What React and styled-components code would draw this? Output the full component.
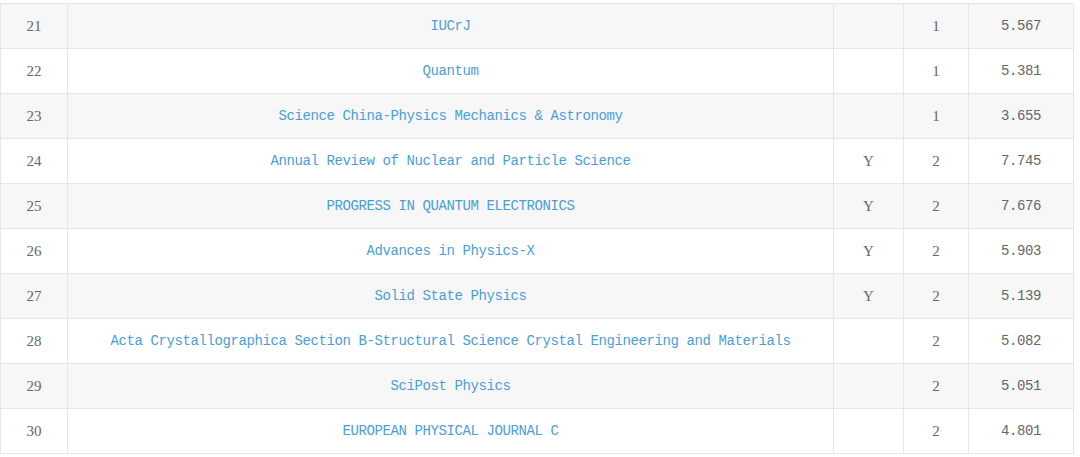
import React from 'react';
import styled, { createGlobalStyle } from 'styled-components';

const GlobalStyle = createGlobalStyle`
  body {
    margin: 0;
    background: #ffffff;
    font-family: "Liberation Mono", "DejaVu Sans Mono", monospace;
  }
`;

const Page = styled.div`
  width: 1080px;
  height: 457px;
  overflow: hidden;
  padding-top: 3px;
  box-sizing: border-box;
`;

const Table = styled.table`
  width: 1074px;
  border-collapse: collapse;
  table-layout: fixed;
`;

const Row = styled.tr`
  height: 45px;
  background: ${props => (props.$striped ? '#f7f7f7' : '#ffffff')};
`;

const Cell = styled.td`
  border: 1px solid #e6e6e6;
  padding: 0;
  text-align: center;
  vertical-align: middle;
  font-family: "Liberation Serif", "DejaVu Serif", serif;
  font-size: 15px;
  color: #666666;
  width: ${props => props.$w}px;
`;

const NameCell = styled(Cell)`
  font-family: "Liberation Mono", "DejaVu Sans Mono", monospace;
  font-size: 14px;
  letter-spacing: -0.4px;
  color: #4a9ed8;
`;

const NumCell = styled(Cell)`
  font-family: "Liberation Mono", "DejaVu Sans Mono", monospace;
  font-size: 14px;
  letter-spacing: -0.4px;
`;

const rows = [
  { rank: 21, name: 'IUCrJ', oa: '', level: 1, score: '5.567' },
  { rank: 22, name: 'Quantum', oa: '', level: 1, score: '5.381' },
  { rank: 23, name: 'Science China-Physics Mechanics & Astronomy', oa: '', level: 1, score: '3.655' },
  { rank: 24, name: 'Annual Review of Nuclear and Particle Science', oa: 'Y', level: 2, score: '7.745' },
  { rank: 25, name: 'PROGRESS IN QUANTUM ELECTRONICS', oa: 'Y', level: 2, score: '7.676' },
  { rank: 26, name: 'Advances in Physics-X', oa: 'Y', level: 2, score: '5.903' },
  { rank: 27, name: 'Solid State Physics', oa: 'Y', level: 2, score: '5.139' },
  { rank: 28, name: 'Acta Crystallographica Section B-Structural Science Crystal Engineering and Materials', oa: '', level: 2, score: '5.082' },
  { rank: 29, name: 'SciPost Physics', oa: '', level: 2, score: '5.051' },
  { rank: 30, name: 'EUROPEAN PHYSICAL JOURNAL C', oa: '', level: 2, score: '4.801' },
];

const App = () => {
  return (
    <Page>
      <GlobalStyle />
      <Table>
        <tbody>
          {rows.map(r => (
            <Row key={r.rank} $striped={r.rank % 2 === 1}>
              <Cell $w={66}>{r.rank}</Cell>
              <NameCell $w={765}>{r.name}</NameCell>
              <Cell $w={69}>{r.oa}</Cell>
              <Cell $w={64}>{r.level}</Cell>
              <NumCell>{r.score}</NumCell>
            </Row>
          ))}
        </tbody>
      </Table>
    </Page>
  );
};

export default App;
